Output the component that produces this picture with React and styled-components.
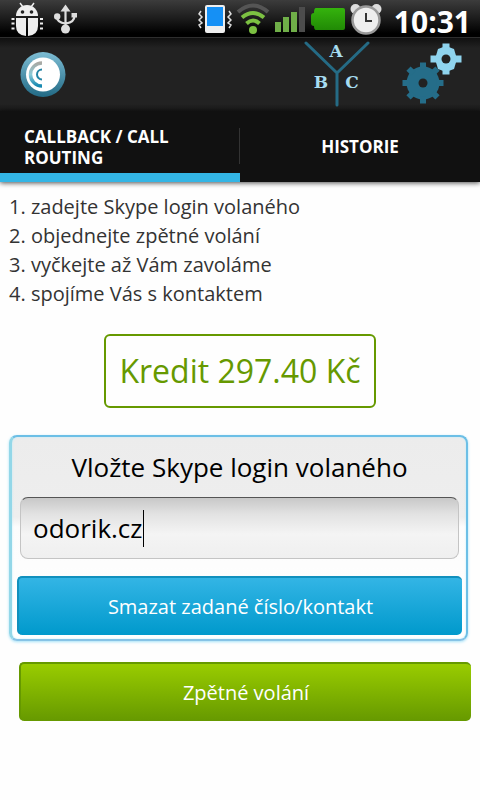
import React, { useState } from 'react'
import styled, { createGlobalStyle } from 'styled-components'

const GlobalStyle = createGlobalStyle`
  * {
    box-sizing: border-box;
  }

  body {
    margin: 0;
    background: #fefefe;
    font-family: "Open Sans", "Noto Sans", sans-serif;
  }

  button, input {
    font-family: inherit;
  }
`

const Screen = styled.div`
  display: flex;
  flex-direction: column;
  min-height: 100vh;
`

const StatusBar = styled.div`
  display: flex;
  align-items: center;
  justify-content: space-between;
  height: 38px;
  padding: 0 9px 0 10px;
  background: linear-gradient(#3c3c3c, #1c1c1c 50%, #000 90%);
  border-bottom: 1px solid #2e2e2e;
`

const StatusGroup = styled.div`
  display: flex;
  align-items: center;
  gap: ${props => props.$gap || 4}px;
`

const Clock = styled.time`
  margin-left: 8px;
  padding-top: 6px;
  color: #fff;
  font-weight: bold;
  font-size: 30px;
  line-height: 32px;
`

const ActionBar = styled.header`
  display: flex;
  align-items: center;
  height: 73px;
  padding-left: 20px;
  background: linear-gradient(#101010, #222 10px, #222 66px, #181818);
`

const ActionButton = styled.button`
  display: flex;
  justify-content: center;
  width: 96px;
  height: 73px;
  padding: 0;
  border: 0;
  background: none;
`

const Spacer = styled.div`
  flex: 1;
`

const Tabs = styled.nav`
  display: grid;
  grid-template-columns: 1fr 1fr;
  height: 71px;
  background: #111;
  box-shadow: 0 1px 5px rgba(0, 0, 0, .7);
`

const Tab = styled.button`
  display: flex;
  align-items: center;
  justify-content: ${props => props.$active ? 'flex-start' : 'center'};
  padding: 9px 24px 0;
  border: 0;
  border-bottom: 9px solid ${props => props.$active ? '#33b5e5' : '#111'};
  background: linear-gradient(#333, #333) right 0 top 17px / ${props => props.$active ? '1px 36px' : '0 0'} no-repeat;
  color: #fff;
  font-weight: bold;
  font-size: 17px;
  line-height: 21px;
  text-align: left;
`

const Steps = styled.ol`
  margin: 0;
  padding: 10px 9px 0;
  list-style: none;
  color: #333;
  font-size: 20px;
  line-height: 29px;
`

const Credit = styled.div`
  align-self: center;
  margin-top: 26px;
  padding: 0 13px;
  border: 2px solid #690;
  border-radius: 6px;
  color: #690;
  font-size: 32px;
  line-height: 70px;
`

const Panel = styled.section`
  display: flex;
  flex-direction: column;
  margin: 27px 12px 0 9px;
  padding: 0 4px 4px 5px;
  border: 2px solid #6cbfe6;
  border-left: 3px solid #93d7e8;
  border-bottom-color: #86c3e6;
  border-radius: 8px;
  background: linear-gradient(#ececec, #eee 80px, #fcfcfc 90px, #fff);
  box-shadow: 0 1px 3px #a5e2f8, inset 0 0 2px #b5ecfa;
`

const PanelLabel = styled.label`
  font-size: 26px;
  line-height: 60px;
  text-align: center;
`

const Field = styled.div`
  display: flex;
  align-items: center;
  height: 62px;
  margin: 0 3px 17px;
  padding: 0 12px;
  border: 1px solid #c4c4c4;
  border-top-color: #555;
  border-radius: 8px;
  background: linear-gradient(#c8c8c8, #e2e2e2 16px, #f4f4f4 36px, #efefef);
`

const FieldInput = styled.input`
  field-sizing: content;
  padding: 0;
  border: 0;
  outline: 0;
  background: none;
  color: #000;
  caret-color: transparent;
  font-size: 26px;
`

const Caret = styled.span`
  width: 1px;
  height: 37px;
  background: #000;
`

const Button = styled.button`
  height: 59px;
  margin: ${props => props.$green ? '21px 9px 0 19px' : '0'};
  border: 0;
  border-top: 2px solid ${props => props.$green ? '#690' : '#1190bd'};
  border-left: 2px solid ${props => props.$green ? '#690' : '#1190bd'};
  border-radius: 5px;
  background: ${props => props.$green
    ? 'linear-gradient(#9c0, #690)'
    : 'linear-gradient(#33b5e5, #09c)'};
  color: #fff;
  font-size: 20px;
`

const BugIcon = () => (
  <svg width="34" height="36" viewBox="0 0 34 36" fill="#eee">
    <path d="M10 2l3 4M24 2l-3 4" stroke="#eee" strokeWidth="1.5" />
    <path d="M6 15a11 11 0 0 1 22 0z" />
    <path d="M6 17h10v18q-10-1-10-10zM18 17h10v8q0 9-10 10z" />
    <path d="M1.500 18h3M1.500 22.500h3M1.500 27.500h3M30 18h3M30 22.500h3M30 27.500h3" stroke="#eee" strokeWidth="2" />
    <circle cx="12.500" cy="11" r="1.800" fill="#222" />
    <circle cx="21.500" cy="11" r="1.800" fill="#222" />
  </svg>
)

const UsbIcon = () => (
  <svg width="24" height="30" viewBox="0 0 24 30" fill="none" stroke="#ddd" strokeWidth="2.200">
    <path d="M11.500 6v18M3 13q0 5.500 8.500 6.500M20.500 12q0 6-8.500 7.500" />
    <path d="M6.500 7.500l5-7 5 7zM17.500 9h5.500v4.500h-5.500z" fill="#ddd" stroke="none" />
    <circle cx="3.200" cy="12.500" r="3.200" fill="#ddd" stroke="none" />
    <circle cx="11.500" cy="25" r="4.500" fill="#ddd" stroke="none" />
  </svg>
)

const VibrateIcon = () => (
  <svg width="34" height="30" viewBox="0 0 34 30">
    <rect x="7" y="1" width="20" height="28" rx="2" fill="#eee" />
    <rect x="9" y="3" width="16" height="19" fill="#1590f5" />
    <path d="M3 7l-2 3 3 3-3 3 3 3-3 2 2 3M31 7l2 3-3 3 3 3-3 3 3 2-2 3" fill="none" stroke="#ddd" strokeWidth="1.500" />
  </svg>
)

const WifiIcon = () => (
  <svg width="34" height="32" viewBox="0 0 34 32" fill="none" strokeWidth="4">
    <path d="M2 9q15-13 30 0" stroke="#555" />
    <path d="M6 14.500q11-9 22 0M10.500 20.500q6.500-6 13 0" stroke="#7cc142" />
    <circle cx="17" cy="27" r="4" fill="#7cc142" />
  </svg>
)

const SignalIcon = () => (
  <svg width="32" height="28" viewBox="0 0 32 28" fill="#6fae48">
    <path d="M1 17h6v10H1zM9 12h6v15H9zM17 7h6v20h-6z" />
    <path d="M25 2h6v25h-6z" fill="#4c4c4c" />
  </svg>
)

const BatteryIcon = () => (
  <svg width="36" height="24" viewBox="0 0 36 24">
    <defs>
      <linearGradient id="charge" x2="0" y2="1">
        <stop stopColor="#35b30d" />
        <stop offset="1" stopColor="#218a05" />
      </linearGradient>
    </defs>
    <path d="M6 1h27q2 0 2 2v18q0 2-2 2H6q-2 0-2-4-3 0-3-3V9q0-3 3-3 0-5 2-5z" fill="url(#charge)" />
  </svg>
)

const AlarmIcon = () => (
  <svg width="32" height="32" viewBox="0 0 32 32">
    <circle cx="5.500" cy="6" r="5" fill="#ddd" />
    <circle cx="26.500" cy="6" r="5" fill="#ddd" />
    <circle cx="16" cy="17" r="13.500" fill="#eee" stroke="#999" strokeWidth="2.500" />
    <path d="M16 10v8h6" fill="none" stroke="#333" strokeWidth="2" />
  </svg>
)

const Logo = () => (
  <svg width="46" height="47" viewBox="0 0 46 47" fill="none">
    <defs>
      <linearGradient id="ring" x2="0" y2="1">
        <stop stopColor="#7dbdd4" />
        <stop offset="1" stopColor="#226a85" />
      </linearGradient>
      <linearGradient id="wave" x2="0" y2="1">
        <stop stopColor="#a9a9a4" />
        <stop offset=".5" stopColor="#8ccbd8" />
        <stop offset="1" stopColor="#1688b0" />
      </linearGradient>
    </defs>
    <circle cx="23" cy="23.500" r="22.500" fill="url(#ring)" />
    <circle cx="23" cy="23.500" r="17" fill="#fff" />
    <path d="M22 12a11.500 11.500 0 0 0 0 23" stroke="url(#wave)" strokeWidth="3.500" />
    <path d="M22 18.500a5 5 0 0 0 0 10" stroke="#2484a5" strokeWidth="2" />
  </svg>
)

const RoutingIcon = () => (
  <svg width="68" height="73" viewBox="0 0 68 73">
    <path d="M4 5l31 30L66 5M35 35v32" fill="none" stroke="#256b85" strokeWidth="3" strokeLinecap="round" />
    <g fill="#a6dcf0" fontFamily="DejaVu Serif, serif" fontWeight="bold" fontSize="17" textAnchor="middle">
      <text x="34" y="19">A</text>
      <text x="19" y="50">B</text>
      <text x="50" y="50">C</text>
    </g>
  </svg>
)

const big = [0, 45, 90, 135, 180, 225, 270, 315]
const small = [0, 90, 180, 270]

const GearsIcon = () => (
  <svg width="62" height="73" viewBox="0 0 62 73">
    <g transform="translate(22 45)" fill="#256d89">
      <circle r="16.500" />
      {big.map(a => <rect key={a} x="-3" y="-20.500" width="6" height="7" transform={`rotate(${a})`} />)}
      <circle r="4.500" fill="#222" />
    </g>
    <g transform="translate(45 21)" fill="#8fd4ee">
      <path d="M0-13L8-10 11 0 8 10 0 13-8 10-11 0-8-10z" />
      {small.map(a => <rect key={a} x="-3.500" y="-15.500" width="7" height="7" transform={`rotate(${a})`} />)}
      <circle r="4.500" fill="#222" />
    </g>
  </svg>
)

const steps = [
  'zadejte Skype login volaného',
  'objednejte zpětné volání',
  'vyčkejte až Vám zavoláme',
  'spojíme Vás s kontaktem',
]

const App = () => {
  const [login, setLogin] = useState('odorik.cz')

  return (
    <Screen>
      <GlobalStyle />
      <StatusBar>
        <StatusGroup $gap={10}>
          <BugIcon />
          <UsbIcon />
        </StatusGroup>
        <StatusGroup>
          <VibrateIcon />
          <WifiIcon />
          <SignalIcon />
          <BatteryIcon />
          <AlarmIcon />
          <Clock>10:31</Clock>
        </StatusGroup>
      </StatusBar>
      <ActionBar>
        <Logo />
        <Spacer />
        <ActionButton aria-label="Routing"><RoutingIcon /></ActionButton>
        <ActionButton aria-label="Nastavení"><GearsIcon /></ActionButton>
      </ActionBar>
      <Tabs>
        <Tab $active>CALLBACK / CALL ROUTING</Tab>
        <Tab>HISTORIE</Tab>
      </Tabs>
      <Steps>
        {steps.map((step, i) => <li key={step}>{i + 1}. {step}</li>)}
      </Steps>
      <Credit>Kredit 297.40 Kč</Credit>
      <Panel>
        <PanelLabel htmlFor="login">Vložte Skype login volaného</PanelLabel>
        <Field>
          <FieldInput id="login" value={login} onChange={e => setLogin(e.target.value)} />
          <Caret />
        </Field>
        <Button onClick={() => setLogin('')}>Smazat zadané číslo/kontakt</Button>
      </Panel>
      <Button $green>Zpětné volání</Button>
    </Screen>
  )
}

export default App
